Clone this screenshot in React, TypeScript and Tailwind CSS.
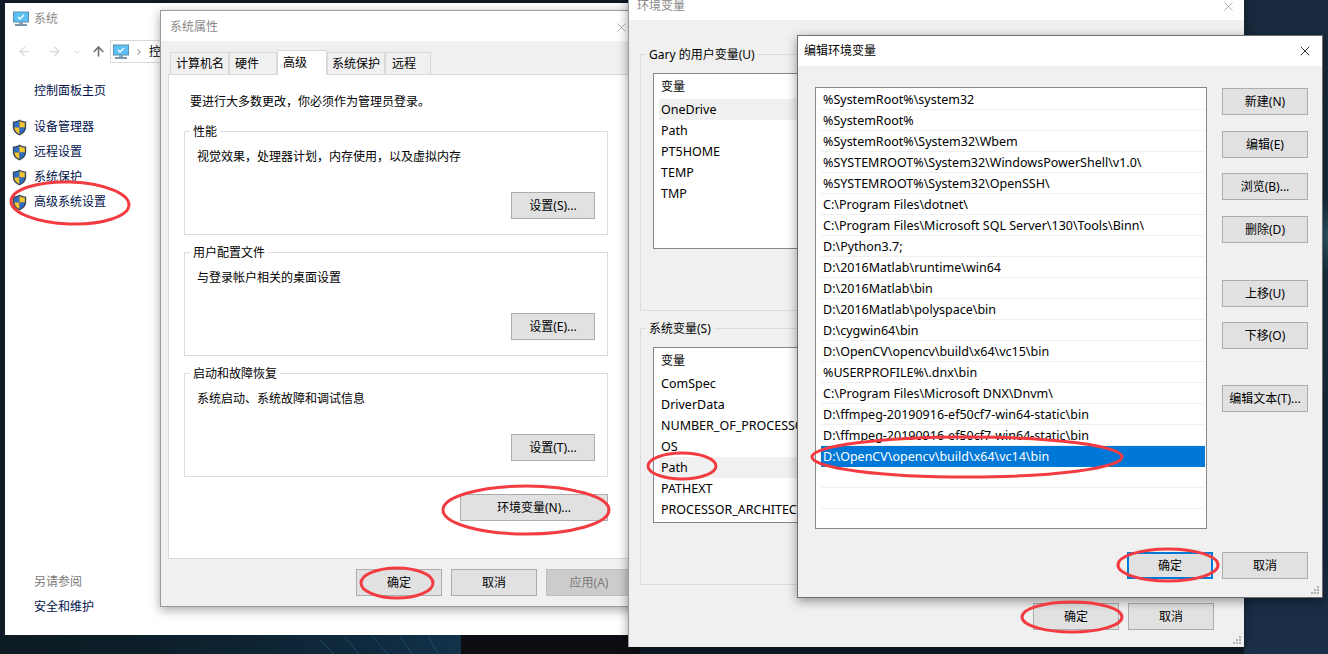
import React from "react";
import { ArrowLeft, ArrowRight, ArrowUp, ChevronDown, ChevronRight, X } from "lucide-react";

const FONT = "font-['Noto_Sans','Noto_Sans_CJK_SC',sans-serif]";
const COMMA = "\uFF0C";

function Monitor({ size = 16 }: { size?: number }) {
  return (
    <svg width={size} height={size} viewBox="0 0 16 16" className="shrink-0">
      <rect x="0.5" y="1" width="15" height="10" fill="#5cc0f5" stroke="#5a8fb0" />
      <path d="M5 6l2 2 4-4" fill="none" stroke="#fff" strokeWidth="1.4" />
      <rect x="6" y="11" width="4" height="2" fill="#8aa6b8" />
      <rect x="2" y="13" width="12" height="2" fill="#7a98ac" />
    </svg>
  );
}

function Shield() {
  return (
    <svg width="15" height="17" viewBox="0 0 15 17" className="shrink-0">
      <path d="M7.5 0.5C5.5 2 3 2.6 0.8 2.6V8c0 4 3 7 6.7 8.5C11.2 15 14.2 12 14.2 8V2.6C12 2.6 9.5 2 7.5 0.5Z" fill="#3a4a5c" />
      <path d="M7.5 2C6 3 4 3.5 2.2 3.7V8.5H7.5Z" fill="#2f6fc4" />
      <path d="M7.5 2C9 3 11 3.5 12.8 3.7V8.5H7.5Z" fill="#f7c531" />
      <path d="M2.2 8.5H7.5V15C4.8 13.8 2.6 11.5 2.2 8.5Z" fill="#f7c531" />
      <path d="M12.8 8.5H7.5V15C10.2 13.8 12.4 11.5 12.8 8.5Z" fill="#2f6fc4" />
    </svg>
  );
}

function Btn({
  label,
  className = "",
  disabled = false,
  primary = false,
}: {
  label: string;
  className?: string;
  disabled?: boolean;
  primary?: boolean;
}) {
  const tone = disabled
    ? "border bg-[#cccccc] border-[#bfbfbf] text-[#7a7a7a]"
    : primary
      ? "border-2 bg-[#e1e1e1] border-[#0078d7] text-black"
      : "border bg-[#e1e1e1] border-[#adadad] text-black";
  return <div className={`h-[27px] flex items-center justify-center text-xs ${tone} ${className}`}>{label}</div>;
}

function Group({ title, text, btn }: { title: string; text: string; btn: string }) {
  return (
    <div className="relative h-[104px] border border-[#dcdcdc] px-3 pt-[17px]">
      <span className="absolute -top-2 left-[5px] bg-white px-[3px] text-xs leading-4 text-black">{title}</span>
      <p className="text-xs leading-4 text-black">{text}</p>
      <Btn label={btn} className="absolute right-3 top-[60px] w-[84px]" />
    </div>
  );
}

function Grip({ className }: { className: string }) {
  return (
    <svg width="9" height="9" viewBox="0 0 9 9" className={className}>
      <g fill="#b0b0b0">
        <rect x="6" y="0" width="2" height="2" />
        <rect x="3" y="3" width="2" height="2" />
        <rect x="6" y="3" width="2" height="2" />
        <rect x="0" y="6" width="2" height="2" />
        <rect x="3" y="6" width="2" height="2" />
        <rect x="6" y="6" width="2" height="2" />
      </g>
    </svg>
  );
}

function SystemWindow() {
  const links = ["设备管理器", "远程设置", "系统保护", "高级系统设置"];
  return (
    <div className="absolute left-[5px] top-[3px] w-[640px] h-[632px] bg-white flex flex-col">
      <div className="flex items-center gap-[5px] h-[31px] pl-2 text-xs text-[#8a8a8a]">
        <Monitor />
        <span>系统</span>
      </div>
      <div className="flex items-center h-[35px] pl-3">
        <ArrowLeft size={15} className="text-[#d8d8d8]" />
        <ArrowRight size={15} className="text-[#d8d8d8] ml-[15px]" />
        <ChevronDown size={10} className="text-[#d8d8d8] ml-[10px]" />
        <ArrowUp size={15} strokeWidth={2.5} className="text-[#707070] ml-[9px]" />
        <div className="ml-[4px] flex items-center gap-[5px] h-[23px] w-[60px] border border-[#d9d9d9] pl-0.5 overflow-hidden text-xs whitespace-nowrap">
          <Monitor />
          <ChevronRight size={10} className="text-[#606060] shrink-0" />
          <span>控</span>
        </div>
      </div>
      <div className="text-xs text-[#00124a] pl-[7px]">
        <p className="mt-[14px] ml-[22px] leading-4">控制面板主页</p>
        <ul className="mt-[20px] flex flex-col gap-[9px]">
          {links.map((l) => (
            <li key={l} className="flex items-center gap-[7px] h-4">
              <Shield />
              <span>{l}</span>
            </li>
          ))}
        </ul>
        <p className="mt-[364px] ml-[22px] leading-4 text-[#7a7a7a]">另请参阅</p>
        <p className="mt-[9px] ml-[22px] leading-4">安全和维护</p>
      </div>
    </div>
  );
}

function PropsWindow() {
  const tabs = [
    { t: "计算机名", c: "w-[59px] pl-[5px]" },
    { t: "硬件", c: "w-[48px] pl-[5px]" },
    { t: "高级", c: "w-[50px] pl-[5px]", on: true },
    { t: "系统保护", c: "w-[58px] pl-[4px]" },
    { t: "远程", c: "w-[46px] pl-[6px]" },
  ];
  return (
    <div className="absolute left-[160px] top-[10px] w-[480px] h-[597px] bg-[#f0f0f0] border border-[#9a9a9a] shadow-[0_3px_10px_rgba(0,0,0,0.35)] flex flex-col">
      <div className="h-[30px] bg-white flex items-center justify-between pl-[9px] pr-[10px] pt-0.5 shrink-0 text-xs text-[#8a8a8a]">
        <span>系统属性</span>
        <X size={15} strokeWidth={1} className="text-[#8a8a8a]" />
      </div>
      <div className="flex items-end h-[33px] pl-[9px] shrink-0">
        {tabs.map((t) => (
          <div
            key={t.t}
            className={`${t.c} flex items-center border border-[#d9d9d9] text-xs ${
              t.on ? "h-[25px] bg-white border-b-0 -mb-px z-10" : "h-[22px] bg-[#f0f0f0] border-b-0"
            }`}
          >
            {t.t}
          </div>
        ))}
      </div>
      <div className="ml-[7px] w-[470px] h-[485px] bg-white border border-[#d9d9d9] shrink-0 pl-[15px] pr-[30px]">
        <p className="mt-[19px] ml-1.5 text-xs leading-4">{`要进行大多数更改${COMMA}你必须作为管理员登录。`}</p>
        <div className="mt-[21px] flex flex-col gap-[17px] w-[424px]">
          <Group title="性能" text={`视觉效果${COMMA}处理器计划${COMMA}内存使用${COMMA}以及虚拟内存`} btn="设置(S)..." />
          <Group title="用户配置文件" text="与登录帐户相关的桌面设置" btn="设置(E)..." />
          <Group title="启动和故障恢复" text="系统启动、系统故障和调试信息" btn="设置(T)..." />
        </div>
        <div className="mt-[17px] w-[424px] flex justify-end">
          <Btn label="环境变量(N)..." className="w-[148px]" />
        </div>
      </div>
      <div className="flex gap-[9px] pl-[195px] pt-[10px]">
        <Btn label="确定" className="w-[86px] shrink-0" />
        <Btn label="取消" className="w-[86px] shrink-0" />
        <Btn label="应用(A)" disabled className="w-[86px] shrink-0" />
      </div>
    </div>
  );
}

function VarList({ names, hi, h }: { names: string[]; hi: string; h: string }) {
  return (
    <div className={`ml-[12px] w-[200px] ${h} bg-white border border-[#828790] pl-[5px] overflow-hidden`}>
      <div className="h-[25px] pl-[2px] flex items-center text-xs">变量</div>
      {names.map((n) => (
        <div key={n} className={`h-[21px] pl-[2px] pt-0.5 flex items-center text-[12.5px] whitespace-nowrap ${n === hi ? "bg-[#f0f0f0]" : ""}`}>
          {n}
        </div>
      ))}
    </div>
  );
}

function EnvWindow() {
  return (
    <div className="absolute left-[628px] -top-[20px] w-[616px] h-[667px] bg-[#f0f0f0] border-l border-[#9a9a9a] shadow-[0_2px_10px_rgba(0,0,0,0.4)] flex flex-col">
      <div className="h-[40px] shrink-0 bg-white flex items-end justify-between pb-[6px] pl-[8px] pr-[8px] text-xs text-[#8a8a8a]">
        <span className="leading-4">环境变量</span>
        <X size={15} strokeWidth={1} className="text-[#8a8a8a]" />
      </div>
      <div className="ml-[11px] mt-[34px] h-[257px] w-[570px] border border-[#dcdcdc] relative pt-[18px] shrink-0">
        <span className="absolute -top-2 left-[5px] bg-[#f0f0f0] px-[3px] text-xs leading-4">Gary 的用户变量(U)</span>
        <VarList h="h-[176px]" hi="OneDrive" names={["OneDrive", "Path", "PT5HOME", "TEMP", "TMP"]} />
      </div>
      <div className="ml-[11px] mt-[17px] h-[257px] w-[570px] border border-[#dcdcdc] relative pt-[18px] shrink-0">
        <span className="absolute -top-2 left-[5px] bg-[#f0f0f0] px-[3px] text-xs leading-4">系统变量(S)</span>
        <VarList
          h="h-[176px]"
          hi="Path"
          names={["ComSpec", "DriverData", "NUMBER_OF_PROCESSORS", "OS", "Path", "PATHEXT", "PROCESSOR_ARCHITECTURE"]}
        />
      </div>
      <div className="flex gap-[9px] pl-[404px] pt-[18px]">
        <Btn label="确定" className="w-[86px]" />
        <Btn label="取消" className="w-[86px]" />
      </div>
      <Grip className="absolute right-[2px] bottom-[2px]" />
    </div>
  );
}

const PATHS = [
  "%SystemRoot%\\system32",
  "%SystemRoot%",
  "%SystemRoot%\\System32\\Wbem",
  "%SYSTEMROOT%\\System32\\WindowsPowerShell\\v1.0\\",
  "%SYSTEMROOT%\\System32\\OpenSSH\\",
  "C:\\Program Files\\dotnet\\",
  "C:\\Program Files\\Microsoft SQL Server\\130\\Tools\\Binn\\",
  "D:\\Python3.7;",
  "D:\\2016Matlab\\runtime\\win64",
  "D:\\2016Matlab\\bin",
  "D:\\2016Matlab\\polyspace\\bin",
  "D:\\cygwin64\\bin",
  "D:\\OpenCV\\opencv\\build\\x64\\vc15\\bin",
  "%USERPROFILE%\\.dnx\\bin",
  "C:\\Program Files\\Microsoft DNX\\Dnvm\\",
  "D:\\ffmpeg-20190916-ef50cf7-win64-static\\bin",
  "D:\\ffmpeg-20190916-ef50cf7-win64-static\\bin",
  "D:\\OpenCV\\opencv\\build\\x64\\vc14\\bin",
  "",
  "",
];

function EditWindow() {
  return (
    <div className="absolute left-[797px] top-[35px] w-[526px] h-[563px] bg-[#f0f0f0] border border-[#6f6f6f] shadow-[0_3px_10px_rgba(0,0,0,0.4)] flex flex-col">
      <div className="h-[30px] shrink-0 bg-white flex items-center justify-between pl-[6px] pr-[9px] text-xs">
        <span>编辑环境变量</span>
        <X size={16} strokeWidth={1.2} className="text-black" />
      </div>
      <div className="flex pl-[17px] pt-[21px] gap-[15px]">
        <div className="w-[392px] h-[442px] bg-white border border-[#828790] pt-px pl-[5px] pr-px shrink-0">
          {PATHS.map((p, i) => (
            <div
              key={i}
              className={`h-[21px] pl-[2px] flex items-center text-[12.5px] whitespace-nowrap ${
                i === 17 ? "bg-[#0078d7] text-white pt-0.5" : "border-b border-[#f0f0f0] pt-[3px]"
              }`}
            >
              {p}
            </div>
          ))}
        </div>
        <div className="flex flex-col w-[86px] pt-px">
          <Btn label="新建(N)" />
          <Btn label="编辑(E)" className="mt-[16px]" />
          <Btn label="浏览(B)..." className="mt-[15px]" />
          <Btn label="删除(D)" className="mt-[16px]" />
          <Btn label="上移(U)" className="mt-[37px]" />
          <Btn label="下移(O)" className="mt-[15px]" />
          <Btn label="编辑文本(T)..." className="mt-[36px]" />
        </div>
      </div>
      <div className="flex gap-[9px] justify-end pr-[14px] pt-[23px]">
        <Btn label="确定" primary className="w-[86px]" />
        <Btn label="取消" className="w-[86px]" />
      </div>
      <Grip className="absolute right-[2px] bottom-[2px]" />
    </div>
  );
}

function Marks() {
  // red hand-drawn rings over the screenshot
  const rings = [
    [70, 203, 59, 21, 2],
    [526, 510, 83, 24, 0],
    [397, 583, 36, 15, 0],
    [682, 466, 34, 13, 0],
    [967, 457, 155, 20, 0],
    [1168, 565, 50, 16, 0],
    [1072, 617, 50, 15, 0],
  ];
  return (
    <svg width="1328" height="654" className="absolute inset-0 pointer-events-none">
      {rings.map(([cx, cy, rx, ry, r], i) => (
        <ellipse
          key={i}
          cx={cx}
          cy={cy}
          rx={rx}
          ry={ry}
          transform={`rotate(${r} ${cx} ${cy})`}
          fill="none"
          stroke="#f23c42"
          strokeWidth="3"
        />
      ))}
    </svg>
  );
}

function Wallpaper() {
  return (
    <svg width="1328" height="654" className="absolute inset-0">
      <defs>
        <linearGradient id="side" x1="0" y1="0" x2="0" y2="1">
          <stop offset="0" stopColor="#1a2a3e" />
          <stop offset="0.3" stopColor="#14283a" />
          <stop offset="0.36" stopColor="#2f5566" />
          <stop offset="0.42" stopColor="#16303f" />
          <stop offset="0.8" stopColor="#14283e" />
          <stop offset="1" stopColor="#1b3048" />
        </linearGradient>
        <linearGradient id="floor" x1="0" y1="0" x2="1" y2="0">
          <stop offset="0" stopColor="#0c1b22" />
          <stop offset="0.25" stopColor="#0d1f2b" />
          <stop offset="0.6" stopColor="#0f2b40" />
          <stop offset="0.72" stopColor="#12324a" />
          <stop offset="0.72" stopColor="#0c0e13" />
          <stop offset="1" stopColor="#0c0e13" />
        </linearGradient>
      </defs>
      <rect x="0" y="0" width="1328" height="654" fill="#0e1a26" />
      <rect x="1244" y="0" width="84" height="654" fill="url(#side)" />
      <rect x="0" y="635" width="640" height="19" fill="url(#floor)" />
      <path d="M320 640l14 14M345 637l14 17M372 636l16 18M400 636l12 18M428 636l10 18" stroke="#1e4a63" strokeWidth="1" />
    </svg>
  );
}

export default function App() {
  return (
    <div className={`relative w-[1328px] h-[654px] overflow-hidden bg-[#0e1a26] text-black ${FONT}`}>
      <Wallpaper />
      <SystemWindow />
      <PropsWindow />
      <EnvWindow />
      <EditWindow />
      <Marks />
    </div>
  );
}
